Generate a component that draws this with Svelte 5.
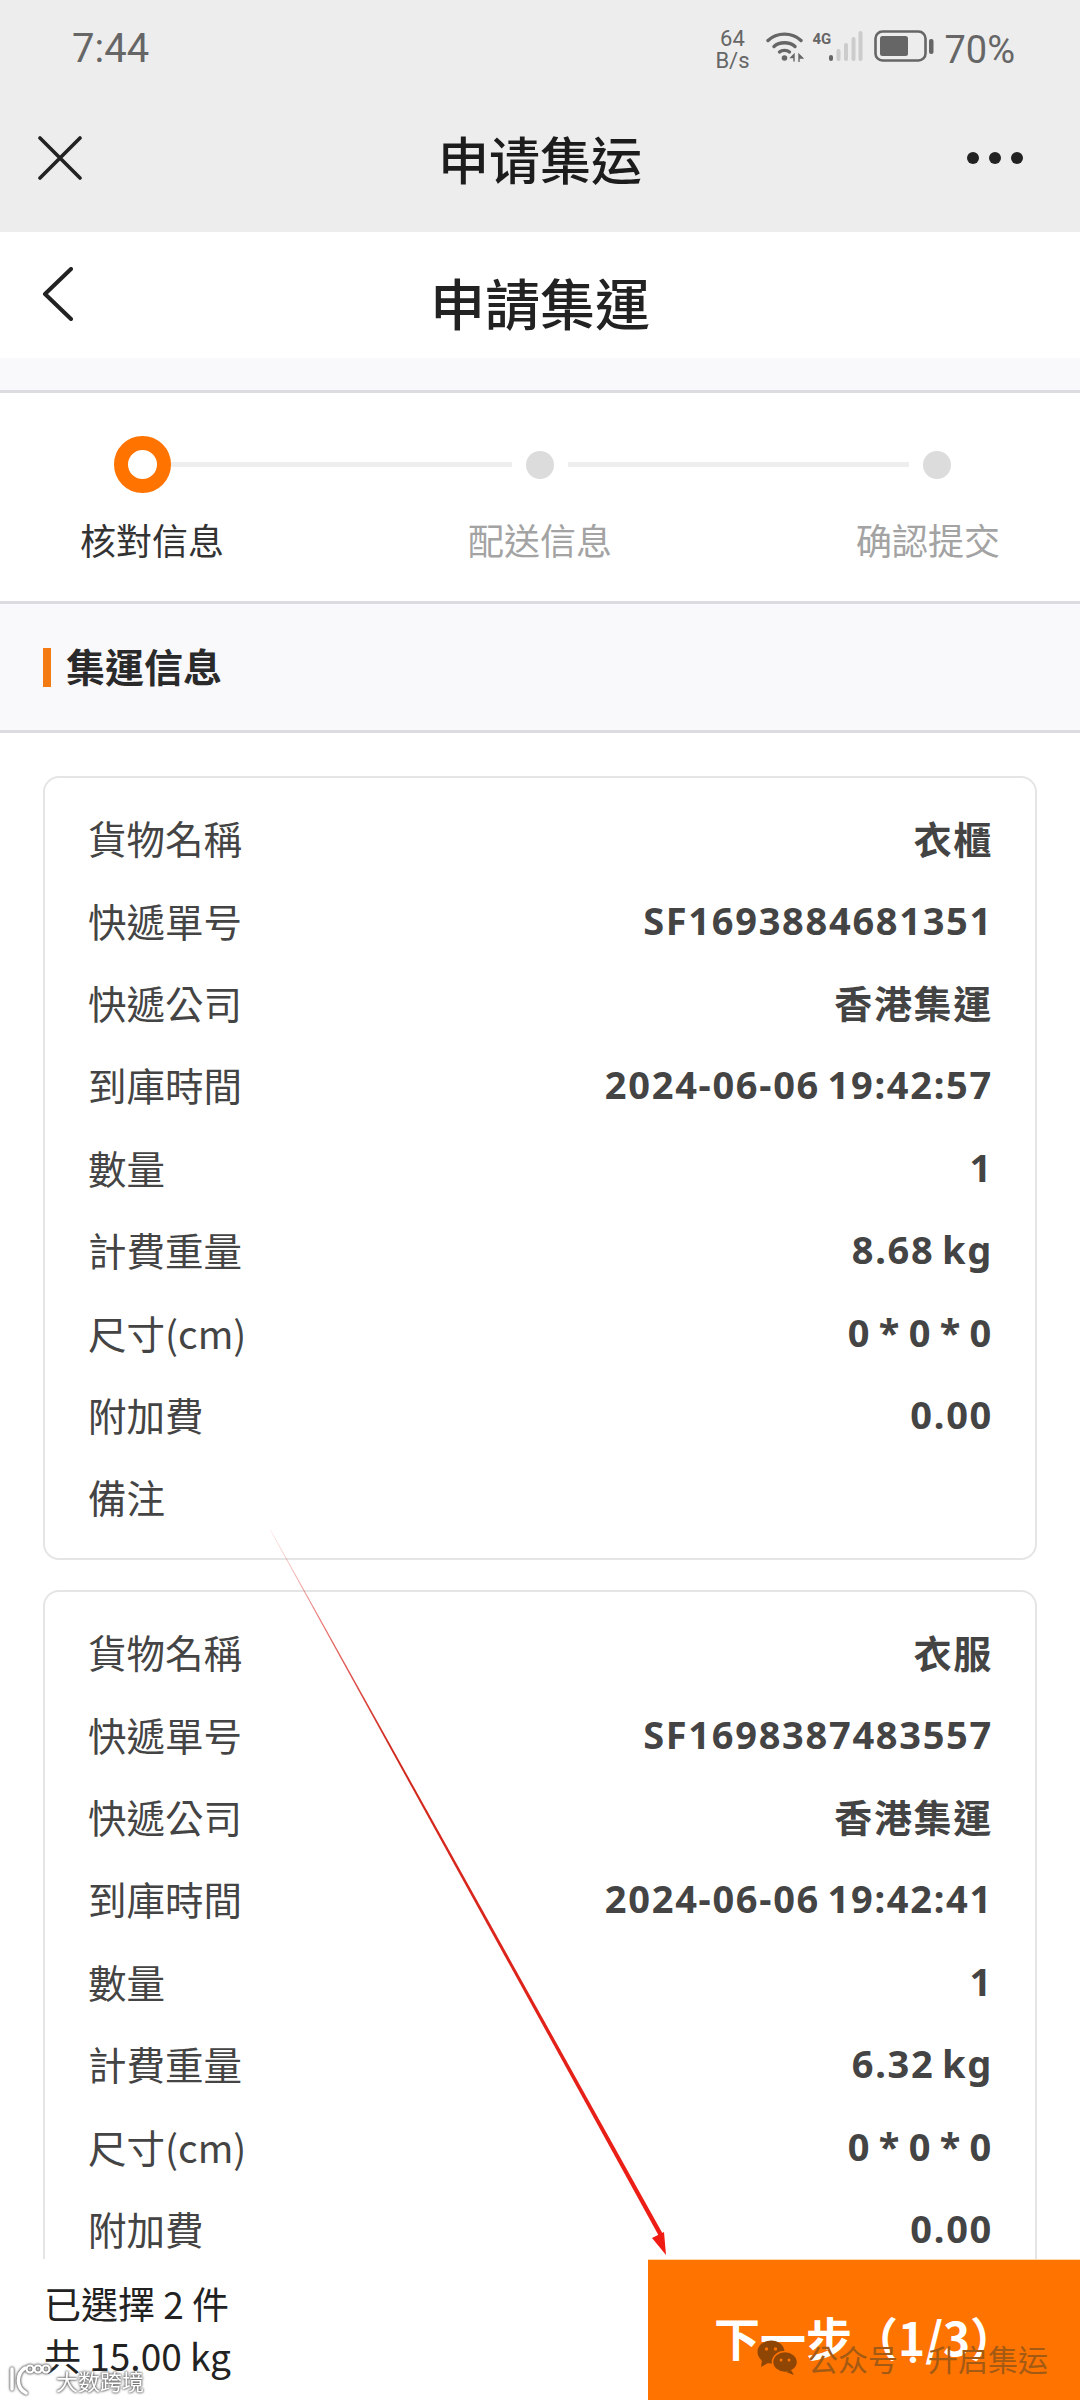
<script>
  const steps = [
    { name: '核對信息', active: true },
    { name: '配送信息' },
    { name: '确認提交' }
  ];

  const parcels = [
    { goods: '衣櫃', no: 'SF1693884681351', time: '2024-06-06 19:42:57', weight: '8.68 kg' },
    { goods: '衣服', no: 'SF1698387483557', time: '2024-06-06 19:42:41', weight: '6.32 kg' }
  ];

  function rows(p) {
    return [
      ['貨物名稱', p.goods],
      ['快遞單号', p.no],
      ['快遞公司', '香港集運'],
      ['到庫時間', p.time],
      ['數量', '1'],
      ['計費重量', p.weight],
      ['尺寸(cm)', '0 * 0 * 0'],
      ['附加費', '0.00'],
      ['備注', '']
    ];
  }
</script>

<div class="page">
  <div class="wx">
    <div class="status">
      <span class="clock">7:44</span>
      <div class="status-right">
        <span class="speed"><span>64</span><span>B/s</span></span>
        <svg class="wifi" width="38" height="32" viewBox="0 0 38 32" fill="none" stroke="#666" stroke-width="3.4" stroke-linecap="round">
          <path d="M2 10.5C11 2 26 2 35 10.5" />
          <path d="M8 16.5C13.5 11.5 23.5 11.5 29 16.5" />
          <path d="M13.5 22C16 19.8 21 19.8 23.5 22" />
          <circle cx="18.500" cy="28" r="2.800" fill="#666" stroke="none" />
          <path d="M28 24.500l-3 3h3zM28 27.500v3.500M33 24.500v7M33 24.500l3.500 3.500h-3.500z" stroke-width="1.400" fill="#666" />
        </svg>
        <span class="net">4G</span>
        <svg class="signal" width="34" height="32" viewBox="0 0 34 32">
          <rect x="0" y="25" width="4" height="6" rx="2" fill="#666" />
          <rect x="7.500" y="19" width="4" height="12" rx="2" fill="#ccc" />
          <rect x="15" y="13" width="4" height="18" rx="2" fill="#ccc" />
          <rect x="22.500" y="7" width="4" height="24" rx="2" fill="#ccc" />
          <rect x="29.500" y="1" width="4" height="30" rx="2" fill="#ccc" />
        </svg>
        <svg class="battery" width="60" height="32" viewBox="0 0 60 32">
          <rect x="1.500" y="1.500" width="50" height="29" rx="7" fill="none" stroke="#666" stroke-width="2.600" />
          <rect x="6" y="6" width="28" height="20" rx="2.500" fill="#666" />
          <rect x="55" y="9" width="4.500" height="15" rx="2" fill="#666" />
        </svg>
        <span class="percent">70%</span>
      </div>
    </div>
    <div class="wx-bar">
      <svg class="wx-close" width="44" height="44" viewBox="0 0 44 44" fill="none" stroke="#222" stroke-width="3.600" stroke-linecap="round">
        <path d="M2 2L42 42M42 2L2 42" />
      </svg>
      <span class="wx-title">申请集运</span>
      <div class="wx-more"><i></i><i></i><i></i></div>
    </div>
  </div>

  <div class="nav">
    <svg class="back" width="32" height="54" viewBox="0 0 32 54" fill="none" stroke="#222" stroke-width="4" stroke-linecap="round" stroke-linejoin="round">
      <path d="M29 2L3 27L29 52" />
    </svg>
    <span class="nav-title">申請集運</span>
  </div>

  <div class="strip"></div>

  <div class="stepper">
    <div class="track">
      <span class="ring"></span>
      <span class="line"></span>
      <span class="dot"></span>
      <span class="line"></span>
      <span class="dot"></span>
    </div>
    <div class="labels">
      {#each steps as s}
        <span class:on={s.active}>{s.name}</span>
      {/each}
    </div>
  </div>

  <div class="section-head">
    <span class="bar"></span>
    <span class="section-title">集運信息</span>
  </div>

  <div class="list">
    {#each parcels as p}
      <div class="card">
        {#each rows(p) as [k, v]}
          <div class="row">
            <span class="k">{k}</span>
            <span class="v">{v}</span>
          </div>
        {/each}
      </div>
    {/each}
  </div>

  <div class="footer">
    <div class="summary">
      <span>已選擇 2 件</span>
      <span>共 15.00 kg</span>
    </div>
    <div class="next">下一步（1/3）</div>
  </div>

  <!-- annotation drawn over the screenshot -->
  <svg class="arrow" width="1080" height="2400" viewBox="0 0 1080 2400">
    <defs>
      <linearGradient id="fade" gradientUnits="userSpaceOnUse" x1="270" y1="1530" x2="665" y2="2255">
        <stop offset="0" stop-color="#d8201a" stop-opacity="0.1" />
        <stop offset="0.12" stop-color="#d8201a" stop-opacity="0.6" />
        <stop offset="0.3" stop-color="#cf2a20" />
        <stop offset="1" stop-color="#f01c14" />
      </linearGradient>
    </defs>
    <polygon points="270,1530 270.800,1530 664,2236 660,2238" fill="url(#fade)" />
    <polygon points="666,2255 652,2238 664,2232" fill="#f01c14" />
  </svg>

  <div class="mark-wechat">
    <svg width="42" height="36" viewBox="0 0 42 36">
      <ellipse cx="14" cy="12" rx="13.500" ry="11.500" fill="#8f4604" />
      <path d="M5 20l-1 7 7-4z" fill="#8f4604" />
      <circle cx="9.500" cy="9" r="1.700" fill="#ff7300" />
      <circle cx="18.500" cy="9" r="1.700" fill="#ff7300" />
      <ellipse cx="28" cy="22" rx="12.500" ry="10.500" fill="#8f4604" stroke="#ff7300" stroke-width="1.500" />
      <path d="M34 30l3 5-8-3z" fill="#8f4604" />
      <circle cx="24" cy="20" r="1.500" fill="#ff7300" />
      <circle cx="32" cy="20" r="1.500" fill="#ff7300" />
    </svg>
    <span class="mark-text">公众号<i>·</i>升启集运</span>
  </div>
  <div class="mark-left">
    <svg width="46" height="36" viewBox="0 0 46 36" fill="none" stroke="#fff" stroke-width="3.500" stroke-linecap="round">
      <path d="M4 7v20" />
      <path d="M17 6C8 12 8 26 18 31" />
      <circle cx="22" cy="7" r="3.500" stroke-width="2.200" />
      <circle cx="30" cy="7" r="3.500" stroke-width="2.200" />
      <circle cx="38" cy="7" r="3.500" stroke-width="2.200" />
    </svg>
    <span>大数跨境</span>
  </div>
</div>

<style>
  :global(body) {
    margin: 0;
    background: #fff;
  }
  .page {
    position: relative;
    width: 1080px;
    height: 2400px;
    overflow: hidden;
    background: #fff;
    font-family: "Noto Sans CJK TC", "Noto Sans", sans-serif;
    color: #444;
  }
  .wx {
    height: 232px;
    background: #ededed;
    box-sizing: border-box;
  }
  .status {
    height: 118px;
    padding: 0 65px 0 72px;
    display: flex;
    justify-content: space-between;
    align-items: flex-start;
    color: #666;
    font-family: Roboto, sans-serif;
  }
  .clock {
    margin-top: 25px;
    font-size: 40px;
    line-height: 48px;
  }
  .status-right {
    display: flex;
    align-items: flex-start;
    margin-top: 28px;
  }
  .speed {
    display: flex;
    flex-direction: column;
    align-items: center;
    width: 36px;
    font-size: 22px;
    line-height: 22px;
  }
  .wifi {
    margin: 2px 0 0 16px;
  }
  .net {
    font-size: 15px;
    font-weight: 700;
    line-height: 16px;
    margin: 3px 0 0 8px;
    width: 18px;
  }
  .signal {
    margin: 2px 0 0 -1px;
  }
  .battery {
    margin: 2px 0 0 11px;
  }
  .percent {
    font-size: 38px;
    line-height: 44px;
    margin: 0 0 0 10px;
  }
  .wx-bar {
    position: relative;
    height: 84px;
    display: flex;
    align-items: center;
    justify-content: center;
    margin-top: -2px;
  }
  .wx-close {
    position: absolute;
    left: 38px;
    top: 20px;
  }
  .wx-title {
    font-size: 51px;
    font-weight: 500;
    color: #1c1c1c;
  }
  .wx-more {
    position: absolute;
    right: 57px;
    top: 36px;
    display: flex;
    gap: 10px;
  }
  .wx-more i {
    width: 12px;
    height: 12px;
    border-radius: 50%;
    background: #222;
  }
  .nav {
    position: relative;
    height: 126px;
    display: flex;
    align-items: center;
    justify-content: center;
  }
  .back {
    position: absolute;
    left: 42px;
    top: 35px;
  }
  .nav-title {
    font-size: 55px;
    font-weight: 500;
    color: #222;
    margin-top: 12px;
  }
  .strip {
    height: 32px;
    background: #f9f8fa;
    border-bottom: 3px solid #dcdbdf;
  }
  .stepper {
    height: 208px;
    box-sizing: border-box;
    padding-top: 43px;
  }
  .track {
    display: flex;
    align-items: center;
    padding-left: 114px;
    height: 57px;
  }
  .ring {
    box-sizing: border-box;
    width: 57px;
    height: 57px;
    border: 14px solid #ff7300;
    border-radius: 50%;
    flex: none;
  }
  .line {
    width: 341px;
    height: 5px;
    background: #eee;
    flex: none;
  }
  .dot {
    width: 28px;
    height: 28px;
    margin: 0 14px;
    border-radius: 50%;
    background: #dcdcdc;
    flex: none;
  }
  .labels {
    display: flex;
    justify-content: space-between;
    padding: 0 80px;
    margin-top: 22px;
    font-size: 36px;
    line-height: 48px;
    color: #a3a3a3;
  }
  .labels .on {
    color: #333;
  }
  .section-head {
    height: 126px;
    background: #f9f8fa;
    border-top: 3px solid #dcdbdf;
    border-bottom: 3px solid #dcdbdf;
    display: flex;
    align-items: center;
    padding-left: 43px;
    gap: 15px;
  }
  .bar {
    width: 8px;
    height: 39px;
    background: #f47a14;
  }
  .section-title {
    font-size: 39px;
    font-weight: 700;
    color: #2a2a2a;
    margin-top: -5px;
  }
  .list {
    padding: 43px 43px 0;
    display: flex;
    flex-direction: column;
    gap: 30px;
  }
  .card {
    box-sizing: border-box;
    height: 784px;
    padding: 18px 43px 0;
    border: 2px solid #e5e5e5;
    border-radius: 16px;
  }
  .row {
    height: 82.400px;
    display: flex;
    justify-content: space-between;
    align-items: center;
  }
  .k {
    font-size: 38.500px;
    color: #444;
  }
  .v {
    font-family: "Noto Sans", "Noto Sans CJK TC", sans-serif;
    font-size: 38px;
    font-weight: 700;
    letter-spacing: 1.700px;
    word-spacing: -4px;
    margin-right: -1px;
    color: #444;
  }
  .footer {
    position: absolute;
    left: 0;
    right: 0;
    bottom: 0;
    height: 141px;
    display: flex;
    justify-content: space-between;
    background: #fff;
  }
  .summary {
    display: flex;
    flex-direction: column;
    padding: 18px 0 0 44px;
    font-size: 37px;
    line-height: 52px;
    color: #222;
  }
  .next {
    width: 432px;
    background: #ff7300;
    color: #fff;
    font-size: 46px;
    font-weight: 700;
    box-sizing: border-box;
    padding: 46px 0 0 66px;
    line-height: 60px;
    border-top: 1px solid #ffd9a8;
  }
  .arrow {
    position: absolute;
    left: 0;
    top: 0;
    pointer-events: none;
  }
  .mark-wechat {
    position: absolute;
    left: 757px;
    top: 2338px;
    display: flex;
    align-items: center;
    gap: 9px;
  }
  .mark-text {
    font-size: 30px;
    line-height: 40px;
    color: #a35a14;
  }
  .mark-text i {
    font-style: normal;
    color: #fff;
  }
  .mark-left {
    position: absolute;
    left: 8px;
    top: 2362px;
    display: flex;
    align-items: center;
    gap: 2px;
    font-size: 22px;
    color: #fff;
    filter: drop-shadow(0 0 1px #555) drop-shadow(0 0 1px #888);
  }
</style>
